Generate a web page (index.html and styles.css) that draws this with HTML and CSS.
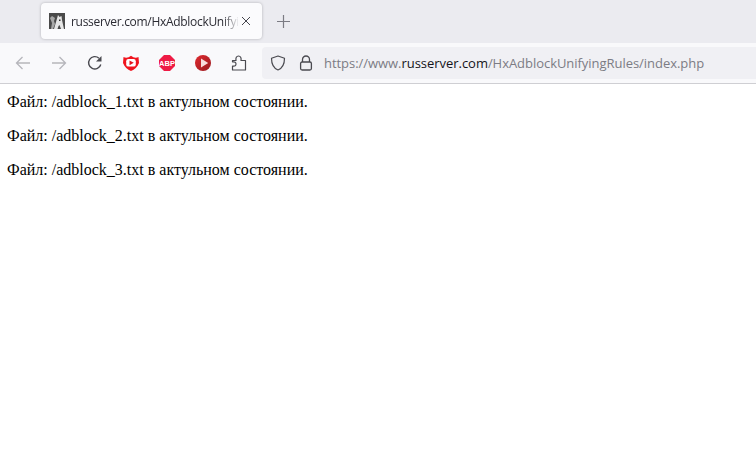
FILE: index.html
```html
<!DOCTYPE html>
<html lang="ru">
<head>
<meta charset="utf-8">
<title>russerver.com/HxAdblockUnifyingRules</title>
<link rel="stylesheet" href="styles.css">
</head>
<body>
<header class="chrome">
  <div class="tabstrip">
    <div class="tab">
      <svg class="favicon" width="16" height="16" viewBox="0 0 16 16"><rect width="16" height="16" fill="#4a4a4a"/><path d="M5 16 7 9l2-7 1.500 2 2-1 .5 4 2 9h-3l-1.500-4-1 1-1 3z" fill="#e6e6e6"/><path d="M1 5l2-2 3 2-1 3 1 3-2 5H2l1-6z" fill="#a8a8a8"/><path d="M10 6.500h1.500V8H10z" fill="#333"/></svg>
      <span class="tab-title">russerver.com/HxAdblockUnifyingRules/index.php</span>
      <svg class="tab-close" width="10" height="10" viewBox="0 0 10 10"><path d="M1 1l8 8M9 1 1 9" stroke="#45454d" stroke-width="1" fill="none"/></svg>
    </div>
    <svg class="new-tab" width="13" height="13" viewBox="0 0 13 13"><path d="M6.500 0v13M0 6.500h13" stroke="#7b7b83" stroke-width="1.200" fill="none"/></svg>
  </div>
  <div class="toolbar">
    <div class="tool-buttons">
      <svg class="tool" width="16" height="16" viewBox="0 0 16 16"><path d="M15 8H1.500M7.500 2 1.500 8l6 6" stroke="#b6b6bb" stroke-width="1.300" fill="none"/></svg>
      <svg class="tool" width="16" height="16" viewBox="0 0 16 16"><path d="M1 8h13.500M8.500 2l6 6-6 6" stroke="#b6b6bb" stroke-width="1.300" fill="none"/></svg>
      <svg class="tool" width="16" height="16" viewBox="0 0 16 16"><path d="M13.800 9.500A6.200 6.200 0 1 1 12 3.200" stroke="#4a4a50" stroke-width="1.400" fill="none"/><path d="M14.500 1v5.500H9z" fill="#4a4a50"/></svg>
      <svg class="tool" width="16" height="16" viewBox="0 0 16 16"><path d="M.5 2C3 3.200 5.500 2.800 8 .7c2.500 2.100 5 2.500 7.500 1.300L16 8c-1.500 4-4.500 6.500-8 8-3.500-1.500-6.500-4-8-8z" fill="#f0141e"/><rect x="3.200" y="4" width="9.600" height="7.600" rx="2.200" fill="#fff"/><path d="M6.500 5.400v4.800L10.800 7.800z" fill="#e5141e"/></svg>
      <svg class="tool" width="16" height="16" viewBox="0 0 16 16"><path d="M5 0h6l5 5v6l-5 5H5l-5-5V5z" fill="#ee1b45"/><text x="8" y="10.800" class="abp">ABP</text></svg>
      <svg class="tool" width="16" height="16" viewBox="0 0 16 16"><defs><linearGradient id="playFill" x1="0" y1="0" x2="1" y2="1"><stop offset="0" stop-color="#e02a30"/><stop offset="1" stop-color="#98191e"/></linearGradient></defs><circle cx="8" cy="8" r="8" fill="url(#playFill)"/><path d="M6 3.500v9L13.200 8z" fill="#f8dcdc"/></svg>
      <svg class="tool puzzle" width="16" height="16" viewBox="0 0 16 16"><path d="M1.500 5.500H5C4.500 3 5.500 1 7.500 1s3 2 2.500 4.500h4.500V15H1.500v-4C4 11.500 5 10.500 5 9S4 6.500 1.500 7z" stroke="#4a4a50" stroke-width="1.200" fill="none" stroke-linejoin="round"/></svg>
    </div>
    <div class="urlbar">
      <svg class="shield" width="16" height="16" viewBox="0 0 16 16"><path d="M8 1 1.500 3.200c0 6 1.800 9.800 6.500 11.800 4.700-2 6.500-5.800 6.500-11.800z" stroke="#4a4a50" stroke-width="1.200" fill="none" stroke-linejoin="round"/></svg>
      <svg class="lock" width="14" height="16" viewBox="0 0 14 16"><path d="M3.500 7V4.500a3.500 3.500 0 0 1 7 0V7" stroke="#4a4a50" stroke-width="1.300" fill="none"/><rect x="1.600" y="7" width="10.800" height="8" rx="1.500" stroke="#4a4a50" stroke-width="1.300" fill="none"/></svg>
      <span class="url">https://www.<span class="host">russerver.com</span>/HxAdblockUnifyingRules/index.php</span>
    </div>
  </div>
</header>
<main class="page">
  <p class="line">Файл: /adblock_1.txt в актульном состоянии.</p>
  <p class="line">Файл: /adblock_2.txt в актульном состоянии.</p>
  <p class="line">Файл: /adblock_3.txt в актульном состоянии.</p>
</main>
</body>
</html>
```
FILE: styles.css
```css
html, body {
  margin: 0;
  height: 100%;
  overflow: hidden;
  background: #fff;
}
.chrome {
  font-family: "Segoe UI", "Open Sans", "Noto Sans", sans-serif;
}
.tabstrip {
  height: 43px;
  box-sizing: border-box;
  padding: 3px 0 4px 41px;
  background: #ebebf0;
  display: flex;
  align-items: center;
}
.tab {
  width: 221px;
  height: 36px;
  box-sizing: border-box;
  padding: 0 0 0 8px;
  display: flex;
  align-items: center;
  background: #fbfbfd;
  border-radius: 4px;
  box-shadow: 0 0 3px rgba(0, 0, 0, 0.25);
}
.favicon { flex: none; }
.tab-title {
  margin-left: 6px;
  width: 170px;
  flex: none;
  overflow: hidden;
  white-space: nowrap;
  font-size: 12px;
  letter-spacing: -0.3px;
  color: #2b2b33;
  -webkit-mask-image: linear-gradient(to right, #000 152px, transparent 168px);
  mask-image: linear-gradient(to right, #000 152px, transparent 168px);
}
.tab-close { flex: none; margin-left: 0; }
.new-tab { margin-left: 15px; }
.toolbar {
  height: 41px;
  box-sizing: border-box;
  background: #f9f9fb;
  border-bottom: 1px solid #cfcfd3;
  display: flex;
  align-items: flex-start;
}
.tool-buttons {
  width: 262px;
  height: 40px;
  box-sizing: border-box;
  padding-left: 15px;
  display: flex;
  align-items: center;
  gap: 20px;
}
.tool { flex: none; }
.abp {
  font-family: "Liberation Sans", sans-serif;
  font-size: 7.500px;
  font-weight: 700;
  fill: #fff;
  text-anchor: middle;
}
.urlbar {
  flex: 1;
  height: 32px;
  margin-top: 4px;
  box-sizing: border-box;
  padding-left: 8px;
  background: #f0f0f4;
  border-radius: 4px 0 0 4px;
  display: flex;
  align-items: center;
}
.lock { margin-left: 13px; }
.url {
  margin-left: 11px;
  font-size: 13px;
  letter-spacing: -0.04px;
  white-space: nowrap;
  color: #7c7c84;
}
.host { color: #15141a; }
.page {
  padding: 1px 7px;
  font-family: "Liberation Serif", "Times New Roman", serif;
  font-size: 16px;
  color: #000;
}
.line {
  margin: 8px 0 16px;
  line-height: 18px;
}
```
